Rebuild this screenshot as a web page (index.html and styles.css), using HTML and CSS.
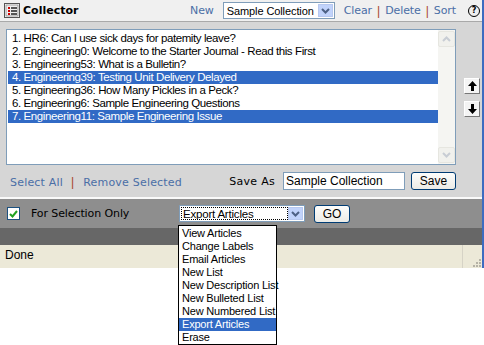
FILE: index.html
```html
<!DOCTYPE html>
<html lang="en">
<head>
    <meta charset="UTF-8">
    <title>Collector</title>
    <link rel="stylesheet" href="styles.css">
</head>
<body>
    <div class="window">
        <div class="app">
            <div class="header">
                <div class="title">
                    <svg class="title-icon" width="16" height="15" viewBox="0 0 16 15">
                        <rect x="0.5" y="0.5" width="15" height="14" fill="#fff" stroke="#555"/>
                        <rect x="2" y="2" width="12" height="11" fill="#eee" stroke="#888" stroke-width="0.8"/>
                        <rect x="4" y="4" width="2" height="2" fill="#c00"/>
                        <rect x="7" y="4" width="6" height="2" fill="#555"/>
                        <rect x="4" y="7" width="2" height="2" fill="#c00"/>
                        <rect x="7" y="7" width="6" height="2" fill="#555"/>
                        <rect x="4" y="10" width="2" height="2" fill="#c00"/>
                        <rect x="7" y="10" width="6" height="2" fill="#555"/>
                    </svg>
                    Collector
                </div>
                <div class="actions">
                    <a class="link">New</a>
                    <div class="select head-select">
                        <span class="value">Sample Collection</span>
                        <span class="drop"><svg width="9" height="6" viewBox="0 0 9 6"><path d="M1 1 L4.5 4.5 L8 1" fill="none" stroke="#4d6185" stroke-width="2"/></svg></span>
                    </div>
                    <a class="link">Clear</a><span class="sep">|</span><a class="link">Delete</a><span class="sep">|</span><a class="link">Sort</a>
                    <span class="help">?</span>
                </div>
            </div>

            <div class="main">
                <div class="list-row">
                    <div class="listbox">
                        <ul class="items">
                            <li>1. HR6: Can I use sick days for patemity leave?</li>
                            <li>2. Engineering0: Welcome to the Starter Joumal - Read this First</li>
                            <li>3. Engineering53: What is a Bulletin?</li>
                            <li class="selected">4. Engineering39: Testing Unit Delivery Delayed</li>
                            <li>5. Engineering36: How Many Pickles in a Peck?</li>
                            <li>6. Engineering6: Sample Engineering Questions</li>
                            <li class="selected">7. Engineering11: Sample Engineering Issue</li>
                        </ul>
                        <div class="scrollbar">
                            <span class="scroll-btn"><svg width="9" height="6" viewBox="0 0 9 6"><path d="M1 5 L4.5 1.5 L8 5" fill="none" stroke="#c8cdd4" stroke-width="2"/></svg></span>
                            <span class="scroll-btn"><svg width="9" height="6" viewBox="0 0 9 6"><path d="M1 1 L4.5 4.5 L8 1" fill="none" stroke="#c8cdd4" stroke-width="2"/></svg></span>
                        </div>
                    </div>
                    <div class="movers">
                        <span class="mover"><svg width="9" height="10" viewBox="0 0 9 10"><path d="M4.5 0 L9 5 L6 5 L6 10 L3 10 L3 5 L0 5 Z" fill="#000"/></svg></span>
                        <span class="mover"><svg width="9" height="10" viewBox="0 0 9 10"><path d="M4.5 10 L9 5 L6 5 L6 0 L3 0 L3 5 L0 5 Z" fill="#000"/></svg></span>
                    </div>
                </div>

                <div class="save-row">
                    <div class="selects">
                        <a class="link">Select All</a><span class="sep">|</span><a class="link">Remove Selected</a>
                    </div>
                    <div class="save">
                        <span class="save-label">Save As</span>
                        <input class="save-input" type="text" value="Sample Collection">
                        <button class="btn">Save</button>
                    </div>
                </div>
            </div>

            <div class="export-bar">
                <label class="check">
                    <span class="checkbox"><svg width="9" height="8" viewBox="0 0 9 8"><path d="M1 4 L3.5 6.5 L8 1" fill="none" stroke="#21a121" stroke-width="2"/></svg></span>
                    For Selection Only
                </label>
                <div class="select export-select">
                    <span class="focus">Export Articles</span>
                    <span class="drop"><svg width="9" height="6" viewBox="0 0 9 6"><path d="M1 1 L4.5 4.5 L8 1" fill="none" stroke="#4d6185" stroke-width="2"/></svg></span>
                </div>
                <button class="btn go">GO</button>
            </div>
            <div class="dark-band"></div>
            <div class="status">
                <span>Done</span>
                <span class="grip">
                    <svg width="11" height="11" viewBox="0 0 11 11">
                        <g fill="#b5b2a6">
                            <rect x="8" y="2" width="2" height="2"/>
                            <rect x="5" y="5" width="2" height="2"/>
                            <rect x="8" y="5" width="2" height="2"/>
                            <rect x="2" y="8" width="2" height="2"/>
                            <rect x="5" y="8" width="2" height="2"/>
                            <rect x="8" y="8" width="2" height="2"/>
                        </g>
                    </svg>
                </span>
            </div>
        </div>

        <ul class="menu">
            <li>View Articles</li>
            <li>Change Labels</li>
            <li>Email Articles</li>
            <li>New List</li>
            <li>New Description List</li>
            <li>New Bulleted List</li>
            <li>New Numbered List</li>
            <li class="selected">Export Articles</li>
            <li>Erase</li>
        </ul>
    </div>
</body>
</html>
```

FILE: styles.css
```css
body {
    margin: 0;
    background: #fff;
    font-family: "Liberation Sans", Arial, sans-serif;
    font-size: 11px;
    color: #000;
}

.window {
    position: relative;
    width: 484px;
    height: 345px;
}

.app {
    width: 482px;
    height: 268px;
    border-right: 2px solid #3d6cc0;
}

.header {
    height: 21px;
    display: flex;
    justify-content: space-between;
    align-items: center;
    background: #f0f0f0;
    border-bottom: 1px solid #a9a9a9;
}

.title {
    display: flex;
    align-items: center;
    gap: 3px;
    padding-left: 4px;
    font-family: "DejaVu Sans", Verdana, sans-serif;
    font-weight: bold;
    font-size: 11px;
}

.actions {
    display: flex;
    align-items: center;
    padding-right: 2px;
}

.link {
    font-family: "DejaVu Sans", Verdana, sans-serif;
    font-size: 11px;
    color: #4a6ea6;
    letter-spacing: 0.2px;
}

.actions .link {
    letter-spacing: -0.1px;
}

.sep {
    color: #a8422a;
    font-size: 12px;
    margin: 0 5px;
}

.select {
    display: flex;
    align-items: center;
    justify-content: space-between;
    background: #fff;
    border: 1px solid #7f9db9;
    box-sizing: border-box;
    font-size: 12px;
    white-space: nowrap;
}

.head-select {
    width: 112px;
    height: 17px;
    margin: 0 9px 0 9px;
    padding-left: 3px;
}

.value {
    font-size: 11px;
    letter-spacing: -0.1px;
}

.drop {
    display: flex;
    align-items: center;
    justify-content: center;
    width: 15px;
    height: 13px;
    margin-right: 1px;
    background: #c1d3fb;
    border: 1px solid #b7c8ef;
    box-sizing: border-box;
}

.help {
    width: 10px;
    height: 10px;
    border: 1.5px solid #000;
    border-radius: 50%;
    margin-left: 12px;
    font-family: "DejaVu Sans", sans-serif;
    font-weight: bold;
    font-size: 8px;
    line-height: 10px;
    text-align: center;
}

.main {
    background: #d6d6d6;
    padding: 7px 0 0 6px;
    height: 177px;
    box-sizing: border-box;
    border-bottom: 2px solid #fafafa;
}

.list-row {
    display: flex;
    align-items: center;
}

.listbox {
    display: flex;
    justify-content: space-between;
    width: 450px;
    height: 136px;
    background: #fff;
    border: 1px solid #7f9db9;
    box-sizing: border-box;
}

.items {
    list-style: none;
    margin: 0;
    padding: 2px 0 0 1px;
    flex: 1;
    font-size: 11.5px;
}

.items li {
    height: 13px;
    line-height: 13px;
    padding-left: 4px;
    white-space: nowrap;
    letter-spacing: -0.4px;
}

.items li.selected,
.menu li.selected {
    background: #316ac5;
    color: #fff;
}

.scrollbar {
    width: 17px;
    display: flex;
    flex-direction: column;
    justify-content: space-between;
    background: #f5f5f2;
    padding: 1px 0;
}

.scroll-btn {
    display: flex;
    align-items: center;
    justify-content: center;
    height: 16px;
    background: #f1f1ed;
    border: 1px solid #e6e6e0;
    border-radius: 2px;
    box-sizing: border-box;
}

.movers {
    display: flex;
    flex-direction: column;
    gap: 7px;
    margin-left: 8px;
}

.mover {
    display: flex;
    align-items: center;
    justify-content: center;
    width: 14px;
    height: 14px;
    background: #f4f4f4;
    border: 1px solid #999;
    border-color: #fff #777 #777 #fff;
}

.save-row {
    display: flex;
    align-items: center;
    justify-content: space-between;
    width: 450px;
    margin-top: 7px;
}

.selects {
    padding-left: 4px;
    padding-top: 1px;
}

.selects .sep {
    margin: 0 9px 0 8px;
}

.save {
    display: flex;
    align-items: center;
}

.save-label {
    font-family: "DejaVu Sans", Verdana, sans-serif;
    font-size: 11px;
    letter-spacing: 0.3px;
    margin-right: 8px;
}

.save-input {
    width: 122px;
    height: 18px;
    border: 1px solid #7f9db9;
    box-sizing: border-box;
    font-family: "Liberation Sans", Arial, sans-serif;
    font-size: 12px;
    padding: 0 2px;
    margin-right: 6px;
}

.btn {
    height: 18px;
    padding: 0;
    background: linear-gradient(#fdfdfb, #ecebe6);
    border: 1px solid #003c74;
    border-radius: 3px;
    font-family: "Liberation Sans", Arial, sans-serif;
    font-size: 12px;
    color: #000;
}

.save .btn {
    width: 45px;
}

.export-bar {
    display: flex;
    align-items: center;
    height: 29px;
    background: #8e8e8e;
    padding-left: 7px;
}

.check {
    display: flex;
    align-items: center;
    font-family: "DejaVu Sans", Verdana, sans-serif;
    font-size: 11px;
    letter-spacing: -0.1px;
    width: 172px;
}

.checkbox {
    display: flex;
    align-items: center;
    justify-content: center;
    width: 11px;
    height: 11px;
    background: #fff;
    border: 1px solid #1c5180;
    margin-right: 11px;
}

.export-select {
    width: 126px;
    height: 17px;
    padding-left: 1px;
}

.focus {
    border: 1px dotted #000;
    width: 107px;
    height: 13px;
    line-height: 12px;
    box-sizing: border-box;
    padding-left: 1px;
    font-size: 11.5px;
    letter-spacing: -0.2px;
    overflow: hidden;
}

.go {
    width: 36px;
    margin-left: 9px;
}

.dark-band {
    height: 17px;
    background: #676767;
}

.status {
    display: flex;
    justify-content: space-between;
    height: 23px;
    line-height: 21px;
    background: #ece9d8;
    padding-left: 5px;
    font-size: 12px;
}

.grip {
    display: flex;
    align-items: flex-end;
    justify-content: flex-end;
    width: 19px;
    border-left: 1px solid #d6d3c6;
}

.menu {
    position: absolute;
    left: 178px;
    top: 225px;
    width: 99px;
    margin: 0;
    padding: 1px 0 0;
    list-style: none;
    background: #fff;
    border: 1px solid #000;
    box-sizing: border-box;
    font-size: 11px;
}

.menu li {
    height: 13px;
    line-height: 13px;
    padding-left: 3px;
    white-space: nowrap;
    letter-spacing: -0.2px;
}
```
